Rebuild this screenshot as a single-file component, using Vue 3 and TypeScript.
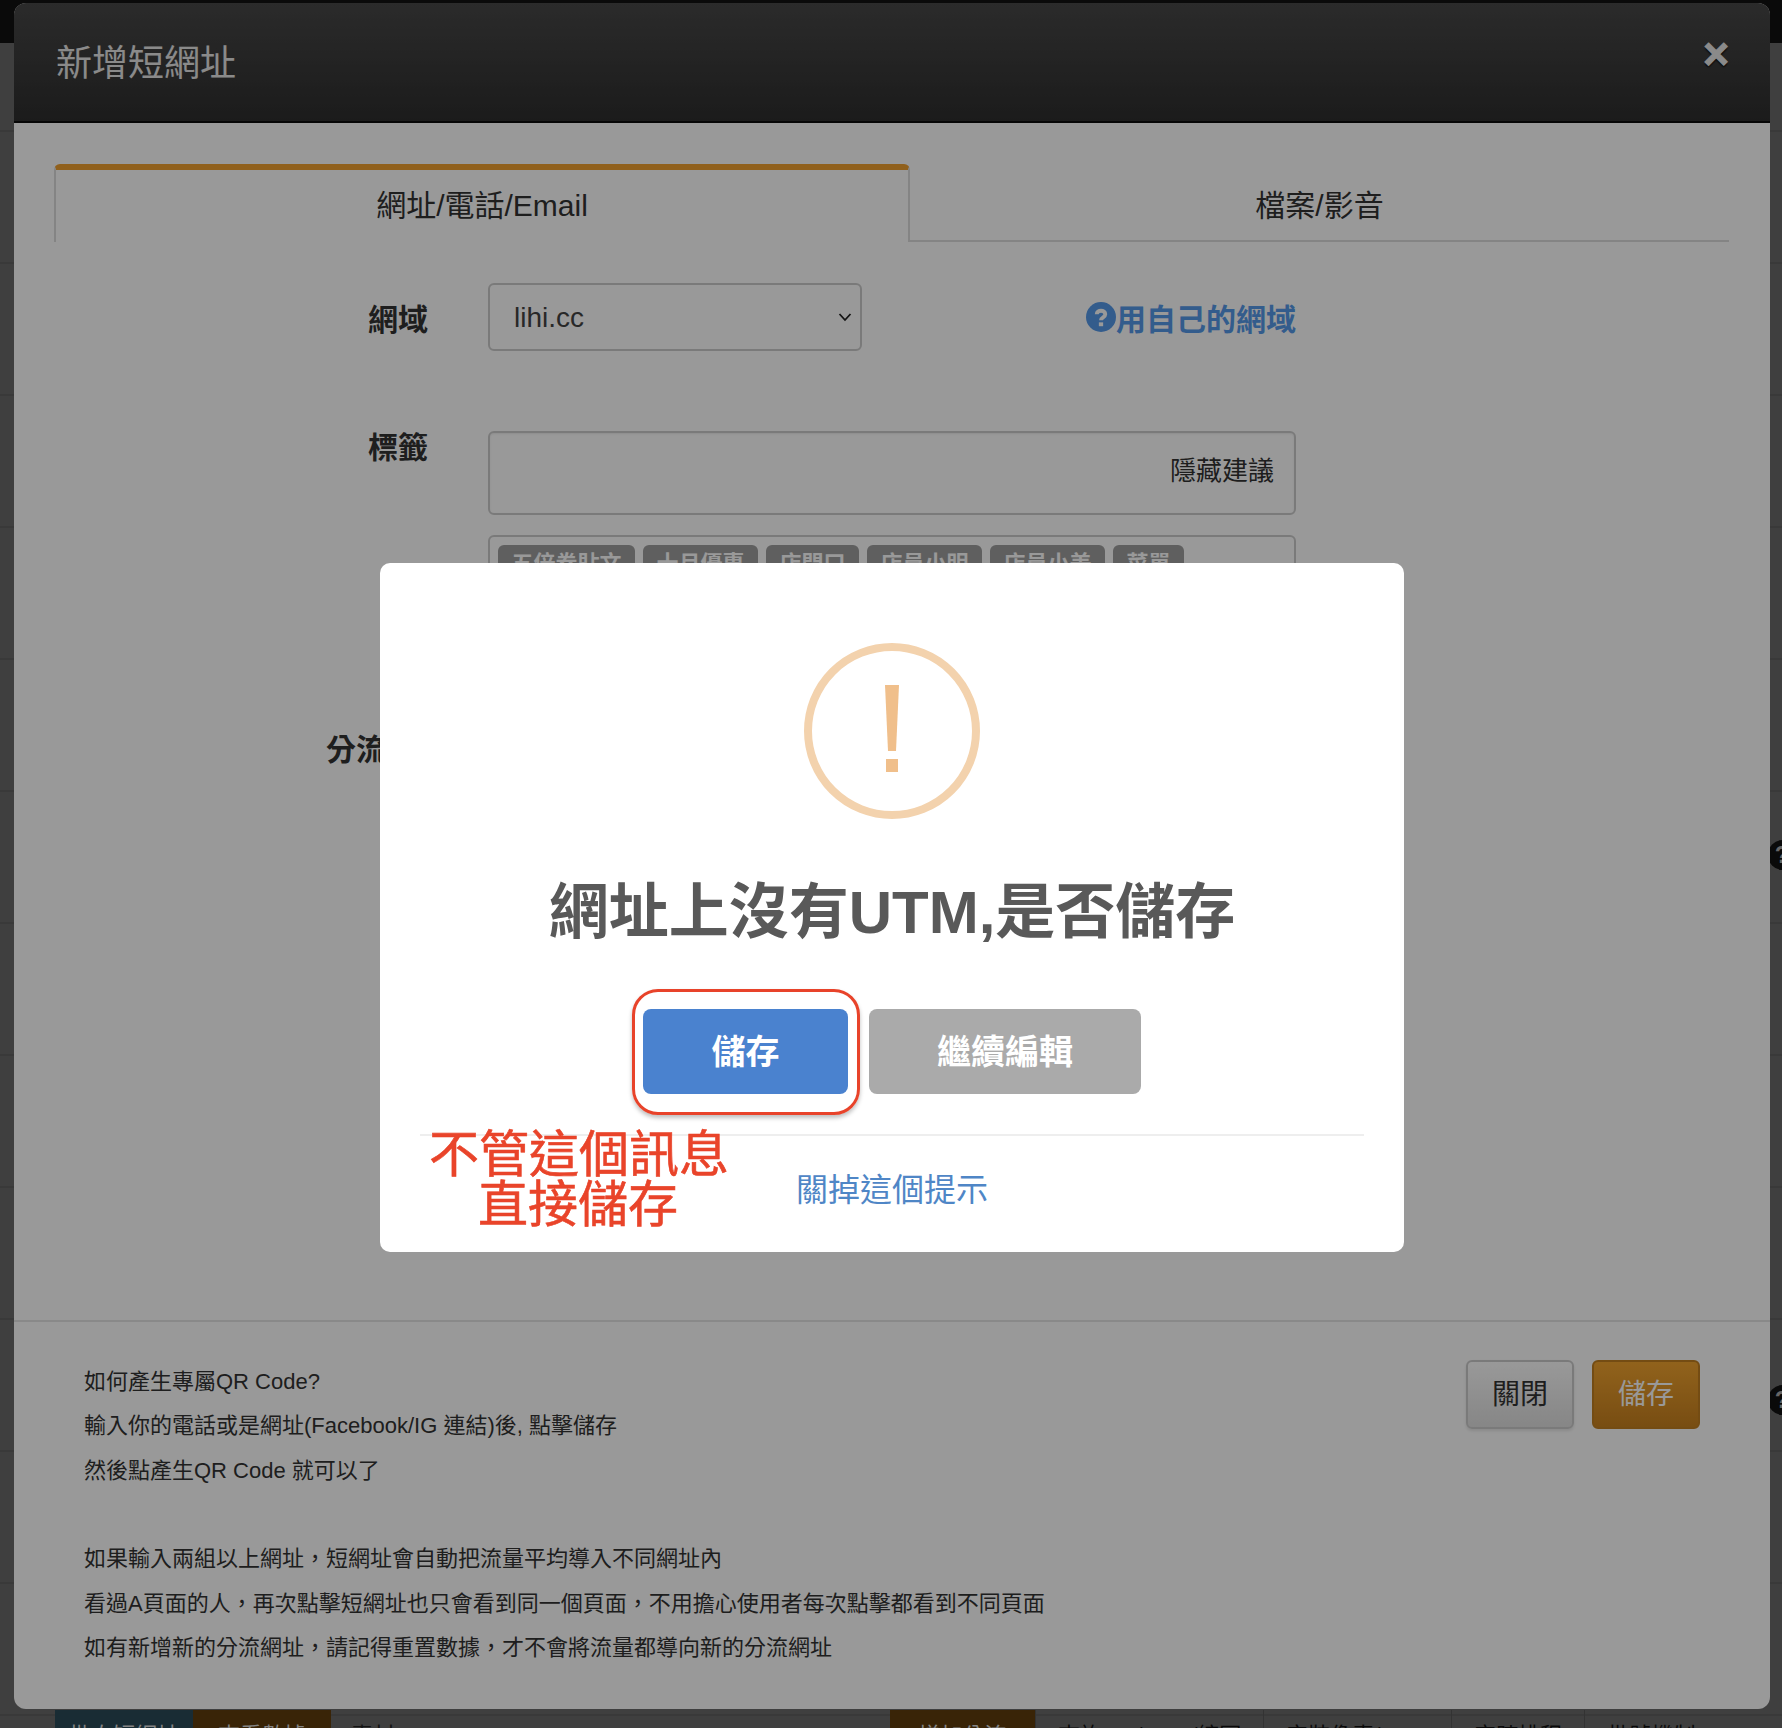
<script setup lang="ts">
const tags: string[] = ['五倍券貼文', '十月優惠', '店門口', '店員小明', '店員小美', '菜單']
const helpBlocks: string[][] = [
  ['如何產生專屬QR Code?', '輸入你的電話或是網址(Facebook/IG 連結)後, 點擊儲存', '然後點產生QR Code 就可以了'],
  ['如果輸入兩組以上網址，短網址會自動把流量平均導入不同網址內', '看過A頁面的人，再次點擊短網址也只會看到同一個頁面，不用擔心使用者每次點擊都看到不同頁面', '如有新增新的分流網址，請記得重置數據，才不會將流量都導向新的分流網址'],
]
const underTabs: string[] = ['查詢OG/Meta/縮圖', '安裝像素/GTM', '定時排程', '批號機制']
</script>

<template>
  <div class="page">
    <div class="backdrop">
      <div class="topbar"></div>
      <span class="side-help first">?</span>
      <span class="side-help second">?</span>
      <div class="under-row">
        <span class="under-btn teal">批次短網址</span>
        <span class="under-btn brown">查看數據</span>
        <span class="under-cell">素材</span>
        <span class="under-btn brown add">增加分流</span>
        <span v-for="t in underTabs" :key="t" class="under-tab">{{ t }}</span>
      </div>
    </div>

    <section class="modal">
      <header class="modal-head">
        <h3>新增短網址</h3>
        <span class="close">×</span>
      </header>

      <div class="modal-body">
        <nav class="tabs">
          <div class="tab active">網址/電話/Email</div>
          <div class="tab">檔案/影音</div>
        </nav>

        <div class="row domain-row">
          <label class="label">網域</label>
          <div class="select-wrap">
            <select class="select">
              <option>lihi.cc</option>
            </select>
            <svg class="chevron" viewBox="0 0 14 10" width="14" height="10">
              <path d="M1.5 2 L7 8 L12.5 2" fill="none" stroke="#222" stroke-width="1.8" />
            </svg>
          </div>
          <a class="own-domain">
            <svg viewBox="0 0 28 28" width="30" height="30">
              <circle cx="14" cy="14" r="14" fill="#5599ea" />
              <path d="M10 11.5 C10 7 18 7 18 11.5 C18 14.5 14 14 14 17" fill="none" stroke="#fff" stroke-width="3.6" />
              <rect x="12" y="19" width="4" height="3.6" fill="#fff" />
            </svg>用自己的網域
          </a>
        </div>

        <div class="row tag-row">
          <label class="label">標籤</label>
          <div class="tag-input">隱藏建議</div>
        </div>

        <div class="suggest">
          <span v-for="t in tags" :key="t" class="tag">{{ t }}</span>
        </div>

        <div class="split-label">分流網址</div>
      </div>

      <footer class="modal-foot">
        <div class="help">
          <div v-for="(block, i) in helpBlocks" :key="i" class="help-block">
            <p v-for="line in block" :key="line">{{ line }}</p>
          </div>
        </div>
        <div class="foot-actions">
          <button class="btn btn-default">關閉</button>
          <button class="btn btn-primary">儲存</button>
        </div>
      </footer>
    </section>

    <div class="overlay">
      <div class="popup">
        <svg class="warn" viewBox="0 0 176 176" width="176" height="176">
          <circle cx="88" cy="88" r="84" fill="none" stroke="#f3d2ad" stroke-width="8" />
          <polygon points="81,42 95,42 92,108 84,108" fill="#f0bf8b" />
          <rect x="82" y="116" width="12" height="13" fill="#f0bf8b" />
        </svg>
        <h2 class="popup-title">網址上沒有UTM,是否儲存</h2>
        <div class="popup-actions">
          <button class="popup-btn confirm">儲存</button>
          <button class="popup-btn cancel">繼續編輯</button>
        </div>
        <div class="popup-foot">
          <a class="dismiss">關掉這個提示</a>
        </div>

        <div class="mark-ring"></div>
        <div class="mark-note">不管這個訊息<br />直接儲存</div>
      </div>
    </div>
  </div>
</template>

<style scoped>
.page {
  position: relative;
  width: 1782px;
  height: 1728px;
  overflow: hidden;
  box-sizing: border-box;
  padding: 3px 12px 18px 14px;
  font-family: "Liberation Sans", "Noto Sans CJK TC", sans-serif;
  color: #333;
}
.backdrop {
  position: absolute;
  inset: 0;
  background-color: #6a6a6a;
  background-image: repeating-linear-gradient(to bottom, transparent 0 130px, #606060 130px 132px);
}
.topbar {
  height: 43px;
  background: #111;
}
.side-help {
  position: absolute;
  left: 1768px;
  width: 28px;
  height: 30px;
  border-radius: 50%;
  background: #111;
  color: #aaa;
  font: bold 24px/30px "Liberation Sans", sans-serif;
  text-align: center;
}
.side-help.first { top: 840px; }
.side-help.second { top: 1385px; }
.under-row {
  position: absolute;
  left: 55px;
  right: 0;
  top: 1710px;
  height: 18px;
  display: flex;
  font-size: 22px;
  line-height: 52px;
  color: #111;
  overflow: hidden;
}
.under-btn {
  flex: none;
  width: 138px;
  text-align: center;
  color: #ddd;
}
.teal { background: #2b4a58; }
.brown { background: #603c0d; }
.under-cell {
  width: 559px;
  padding-left: 20px;
  box-sizing: border-box;
  color: #222;
}
.add { width: 145px; }
.under-tab {
  flex: none;
  padding: 0 22px;
  border-left: 1px solid #555;
  white-space: nowrap;
}

.modal {
  position: relative;
  height: 1706px;
  display: flex;
  flex-direction: column;
  background: #fff;
  border-radius: 12px;
  overflow: hidden;
}
.modal-head {
  flex: none;
  height: 120px;
  box-sizing: border-box;
  padding: 0 42px;
  display: flex;
  justify-content: space-between;
  background: linear-gradient(to bottom, #484848, #2e2e2e);
  border-bottom: 2px solid #0a0a0a;
}
.modal-head h3 {
  margin: 0;
  font-size: 36px;
  font-weight: 400;
  line-height: 122px;
  color: #e6e6e6;
}
.close {
  font-size: 44px;
  font-weight: 700;
  line-height: 101px;
  color: #e6e6e6;
  -webkit-text-stroke: 1.2px #e6e6e6;
  margin-right: -1px;
  text-shadow: 0 2px 2px #000;
}
.modal-body {
  flex: 1;
  padding: 41px 41px 0 40px;
  min-height: 0;
}
.tabs {
  display: flex;
  height: 78px;
}
.tab {
  flex: 1;
  font-size: 30px;
  line-height: 84px;
  text-align: center;
  box-sizing: border-box;
  border-bottom: 2px solid #ddd;
}
.tab.active {
  flex: none;
  width: 856px;
  border: 2px solid #ddd;
  border-top: 6px solid #f0a030;
  border-bottom: none;
  border-radius: 6px 6px 0 0;
  line-height: 72px;
}
.row {
  display: flex;
}
.label {
  flex: none;
  width: 374px;
  margin-right: 60px;
  text-align: right;
  font-size: 30px;
  font-weight: 700;
  color: #333;
}
.domain-row {
  margin-top: 41px;
  height: 68px;
  align-items: center;
}
.select-wrap {
  position: relative;
  flex: none;
  width: 374px;
  height: 68px;
}
.select {
  width: 100%;
  height: 100%;
  box-sizing: border-box;
  padding: 0 24px;
  appearance: none;
  background: #fff;
  border: 2px solid #ccc;
  border-radius: 6px;
  font: 28px "Liberation Sans", sans-serif;
  color: #444;
}
.chevron {
  position: absolute;
  right: 10px;
  top: 29px;
}
.own-domain {
  margin-left: 224px;
  display: flex;
  align-items: center;
  font-size: 30px;
  font-weight: 700;
  color: #5599ea;
  white-space: nowrap;
}
.tag-row {
  margin-top: 80px;
}
.tag-row .label {
  line-height: 34px;
}
.tag-input {
  width: 808px;
  height: 84px;
  box-sizing: border-box;
  border: 2px solid #ccc;
  border-radius: 6px;
  padding: 0 20px;
  text-align: right;
  font-size: 26px;
  line-height: 76px;
  color: #333;
  box-shadow: inset 0 1px 2px rgba(0, 0, 0, 0.08);
}
.suggest {
  margin: 20px 0 0 434px;
  width: 808px;
  height: 120px;
  box-sizing: border-box;
  padding: 8px;
  display: flex;
  gap: 8px;
  border: 2px solid #ccc;
  border-radius: 6px;
}
.tag {
  height: 40px;
  padding: 0 13.5px;
  border-radius: 6px;
  background: #9e9e9e;
  color: #fff;
  font-size: 22px;
  font-weight: 700;
  line-height: 38px;
}
.split-label {
  margin: 75px 0 0 272px;
  font-size: 30px;
  font-weight: 700;
  line-height: 40px;
  color: #333;
}
.modal-foot {
  flex: none;
  height: 389px;
  box-sizing: border-box;
  padding: 38px 70px 0 70px;
  display: flex;
  justify-content: space-between;
  border-top: 2px solid #e5e5e5;
}
.help {
  font-size: 22px;
  line-height: 44.4px;
  color: #333;
}
.help p {
  margin: 0;
}
.help-block + .help-block {
  margin-top: 44.2px;
}
.foot-actions {
  display: flex;
  gap: 18px;
}
.btn {
  width: 108px;
  height: 69px;
  box-sizing: border-box;
  padding: 0 0 5px;
  border-radius: 6px;
  font: 28px "Liberation Sans", "Noto Sans CJK TC", sans-serif;
}
.btn-default {
  background: linear-gradient(to bottom, #fff, #e0e0e0);
  border: 2px solid #ccc;
  color: #333;
  box-shadow: 0 2px 3px rgba(0, 0, 0, 0.1);
}
.btn-primary {
  background: linear-gradient(to bottom, #f2a42f, #c8811f);
  border: 2px solid #c27f20;
  color: #fff;
}

.overlay {
  position: absolute;
  inset: 0;
  display: flex;
  justify-content: center;
  align-items: flex-start;
  padding: 563px 0 0 2px;
  background: rgba(0, 0, 0, 0.4);
}
.popup {
  position: relative;
  flex: none;
  width: 1024px;
  height: 689px;
  box-sizing: border-box;
  padding-top: 80px;
  display: flex;
  flex-direction: column;
  align-items: center;
  background: #fff;
  border-radius: 10px;
}
.warn {
  flex: none;
}
.popup-title {
  margin: 49px 0 0;
  font-size: 60px;
  font-weight: 700;
  line-height: 90px;
  color: #595959;
  white-space: nowrap;
}
.popup-actions {
  margin-top: 51px;
  display: flex;
  gap: 21px;
}
.popup-btn {
  height: 85px;
  padding: 0 0 4px;
  border: none;
  border-radius: 8px;
  color: #fff;
  font: 700 34px "Liberation Sans", "Noto Sans CJK TC", sans-serif;
}
.confirm {
  width: 205px;
  background: #4a82cf;
}
.cancel {
  width: 272px;
  background: #aaaaaa;
}
.popup-foot {
  margin-top: 40px;
  width: 944px;
  box-sizing: border-box;
  border-top: 2px solid #eee;
  padding-top: 30px;
  text-align: center;
}
.dismiss {
  font-size: 32px;
  line-height: 48px;
  color: #4f86c6;
}
.mark-ring {
  position: absolute;
  left: 252px;
  top: 426px;
  width: 228px;
  height: 126px;
  box-sizing: border-box;
  border: 3px solid #e8432a;
  border-radius: 26px;
  box-shadow: 0 3px 4px rgba(0, 0, 0, 0.25);
}
.mark-note {
  position: absolute;
  left: 49px;
  top: 567px;
  width: 298px;
  text-align: center;
  font-size: 50px;
  line-height: 50px;
  color: #e9442a;
  -webkit-text-stroke: 0.6px #e9442a;
  white-space: nowrap;
}
</style>
